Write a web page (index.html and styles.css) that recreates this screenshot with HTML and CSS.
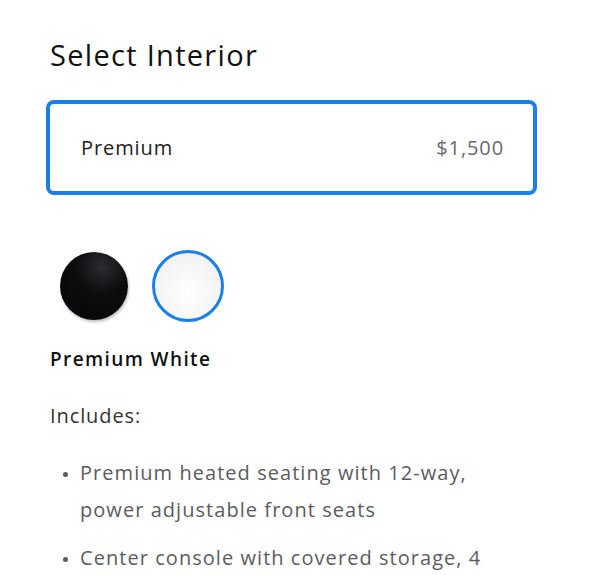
FILE: index.html
```html
<!DOCTYPE html>
<html>
<head>
<meta charset="utf-8">
<link rel="stylesheet" href="styles.css">
</head>
<body>
<main class="panel">
  <h1 class="title">Select Interior</h1>
  <div class="option">
    <span class="option-name">Premium</span>
    <span class="option-price">$1,500</span>
  </div>
  <div class="swatches">
    <span class="swatch swatch-black"></span>
    <span class="swatch swatch-white selected"></span>
  </div>
  <h2 class="color-name">Premium White</h2>
  <p class="includes">Includes:</p>
  <ul class="features">
    <li>Premium heated seating with 12-way, power adjustable front seats</li>
    <li>Center console with covered storage, 4 USB ports and wireless charging</li>
  </ul>
</main>
</body>
</html>
```
FILE: styles.css
```css
html, body {
  margin: 0;
  padding: 0;
  background: #ffffff;
}
body {
  font-family: "Open Sans", "Liberation Sans", sans-serif;
  color: #171a20;
}
.panel {
  padding: 36px 0 0 50px;
  width: 487px;
}
.title {
  margin: 0;
  font-size: 29px;
  font-weight: 400;
  letter-spacing: 1.3px;
  line-height: 38px;
  color: #111;
}
.option {
  margin: 26px 0 0 -4px;
  height: 87px;
  border: 4px solid #1a7fe8;
  border-radius: 8px;
  display: flex;
  align-items: center;
  justify-content: space-between;
  padding: 0 29px 0 31px;
  font-size: 20px;
  letter-spacing: 0.9px;
}
.option-name { color: #222; }
.option-price { color: #6a6a6a; }
.swatches {
  display: flex;
  gap: 24px;
  margin: 55px 0 0 10px;
  align-items: center;
}
.swatch {
  width: 68px;
  height: 68px;
  border-radius: 50%;
  box-sizing: border-box;
}
.swatch-black {
  background: radial-gradient(circle at 62% 22%, #2c2c30 0%, #0c0c0f 40%, #060608 100%);
  box-shadow: 1px 2px 3px rgba(0,0,0,0.25);
}
.swatch-white {
  width: 72px;
  height: 72px;
  background: radial-gradient(circle at 50% 60%, #ffffff 0%, #f3f3f4 70%, #eaeaeb 100%);
  border: 3px solid #1a7fe8;
}
.color-name {
  margin: 24px 0 0;
  font-size: 19px;
  font-weight: 600;
  letter-spacing: 1.4px;
  line-height: 26px;
  color: #111;
}
.includes {
  margin: 31px 0 0;
  font-size: 20px;
  letter-spacing: 0.9px;
  line-height: 26px;
  color: #333;
}
.features {
  margin: 25px 0 0;
  padding: 0 0 0 30px;
  font-size: 20px;
  letter-spacing: 1.05px;
  line-height: 37px;
  color: #5c5c5e;
  width: 420px;
}
.features li {
  margin-bottom: 11px;
}
.features li::marker {
  font-size: 14px;
}
```
